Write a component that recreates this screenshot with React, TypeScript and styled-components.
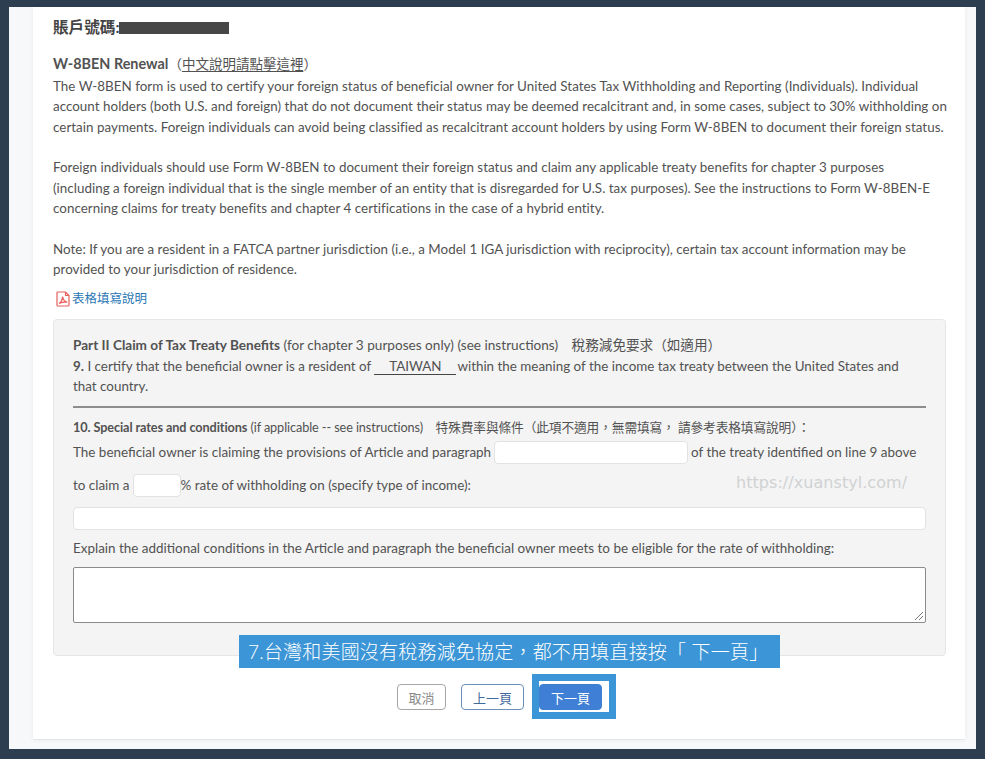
import React from 'react';
import styled, { createGlobalStyle } from 'styled-components';

const GlobalStyle = createGlobalStyle`
  html, body {
    margin: 0;
    padding: 0;
    background: #2c3e50;
  }
  body {
    font-family: Lato, "Noto Sans CJK TC", sans-serif;
    color: #525252;
  }
`;

const Page = styled.div`
  width: 985px;
  height: 759px;
  box-sizing: border-box;
  padding: 7px 9px 10px;
  overflow: hidden;
`;

const Shell = styled.div`
  height: 100%;
  background: #f7f8fa;
  padding: 0 11px 0 24px;
`;

const Panel = styled.main`
  position: relative;
  height: 733px;
  box-sizing: border-box;
  background: #fff;
  border-bottom: 1px solid #e6e7ea;
  box-shadow: 0 0 5px rgba(0, 0, 0, 0.06);
  padding: 10px 20px 0;
  font-size: 13.4px;
  line-height: 20.4px;
`;

const AccountRow = styled.div`
  display: flex;
  align-items: center;
  height: 20px;
  font-size: 15.6px;
  font-weight: 700;
  color: #444;
`;

const Redacted = styled.span`
  width: 110px;
  height: 12px;
  margin-top: 1px;
  background: #474747;
`;

const FormTitle = styled.div`
  margin-top: 15.2px;
  height: 23.6px;
  line-height: 23.6px;
  font-size: 13.5px;
  b { font-weight: 700; font-size: 14.4px; }
  u { text-underline-offset: 2px; }
`;

const Paragraph = styled.p`
  margin: 0 0 20.4px;
  letter-spacing: 0.02px;
  white-space: nowrap;
`;

const PdfLink = styled.a`
  display: flex;
  align-items: center;
  gap: 2px;
  margin: -11px 0 0 3px;
  height: 20px;
  color: #2a77b5;
  font-size: 12.5px;
`;

const Well = styled.section`
  margin-top: 10px;
  width: 893px;
  height: 337px;
  box-sizing: border-box;
  background: #f4f4f4;
  border: 1px solid #e6e6e6;
  border-radius: 4px;
  padding: 15px 19px 0;
`;

const PartLine = styled.div`
  font-size: 13.6px;
  white-space: nowrap;
`;

const CertifyLine = styled.div`
  font-size: 13.4px;
  white-space: nowrap;
`;

const FilledBlank = styled.span`
  display: inline-block;
  width: 82px;
  margin-right: 1px;
  text-align: center;
  line-height: 16px;
  border-bottom: 1px solid #444;
`;

const Divider = styled.hr`
  margin: 10px 0 9px;
  border: 0;
  border-top: 2px solid #8d8d8d;
`;

const SmallLine = styled.div`
  font-size: 12.7px;
  height: 20px;
  letter-spacing: -0.1px;
  white-space: nowrap;
  b { font-weight: 700; }
`;

const FieldRow = styled.div`
  display: flex;
  align-items: center;
  height: 24px;
  margin-top: ${p => p.$top ?? 0}px;
  font-size: 13.45px;
  white-space: nowrap;
`;

const TextBox = styled.div`
  box-sizing: border-box;
  flex: none;
  width: ${p => (p.$w ? `${p.$w}px` : '100%')};
  height: 23px;
  margin: 0 ${p => p.$after ?? 0}px 0 ${p => (p.$w ? 3 : 0)}px;
  background: #fff;
  border: 1px solid #e2e2e2;
  border-radius: 4px;
`;

const Label = styled.div`
  margin-top: 8px;
  height: 20px;
  font-size: 13.45px;
  white-space: nowrap;
`;

const Explain = styled.div`
  box-sizing: border-box;
  position: relative;
  margin-top: 9px;
  height: 56px;
  background: #fff;
  border: 1px solid #8a8a8a;
  border-radius: 2px;
`;

const Grip = styled.svg`
  position: absolute;
  right: 1px;
  bottom: 1px;
`;

const Watermark = styled.div`
  position: absolute;
  left: 703px;
  top: 464px;
  font-family: "DejaVu Sans", sans-serif;
  font-size: 16px;
  line-height: 24px;
  color: #d0d2d3;
  letter-spacing: 0.05px;
`;

const Buttons = styled.div`
  display: flex;
  gap: 15px;
  margin: 28px 0 0 344px;
`;

const Btn = styled.button`
  box-sizing: border-box;
  width: ${p => p.$w}px;
  height: 26px;
  padding: 0;
  font: 13px Lato, "Noto Sans CJK TC", sans-serif;
  border-radius: 4px;
  border: 1px solid ${p => p.$border};
  background: ${p => p.$bg};
  color: ${p => p.$color};
`;

const Caption = styled.div`
  position: absolute;
  left: 206px;
  top: 628px;
  width: 541px;
  height: 33px;
  box-sizing: border-box;
  padding-left: 9px;
  background: #3b95d6;
  color: #fff;
  font-size: 19px;
  font-weight: 300;
  letter-spacing: 0.2px;
  line-height: 33px;
  white-space: nowrap;
`;

const Highlight = styled.div`
  position: absolute;
  left: 499px;
  top: 667px;
  width: 84px;
  height: 45px;
  box-sizing: border-box;
  border: 7px solid #3b95d6;
  pointer-events: none;
`;

const PdfIcon = () => (
  <svg width="14" height="16" viewBox="0 0 14 16" fill="none" stroke="#e8605c">
    <path d="M2 1h7.5L13 4.5V14a1 1 0 0 1-1 1H2a1 1 0 0 1-1-1V2a1 1 0 0 1 1-1zM9.5 1v3.5H13" strokeWidth="1.2" />
    <path d="M3 12.5c2-1.2 3.3-3.6 3.6-7 .4 2.8 2 5 4.6 5.6-3-.3-5.800.2-8.200 1.400z" strokeWidth="1.3" />
  </svg>
);

export default function App() {
  return (
    <Page>
      <GlobalStyle />
      <Shell>
        <Panel>
          <AccountRow>
            賬戶號碼:<Redacted />
          </AccountRow>
          <FormTitle>
            <b>W-8BEN Renewal</b>（<u>中文說明請點擊這裡</u>）
          </FormTitle>
          <Paragraph>
            The W-8BEN form is used to certify your foreign status of beneficial owner for United States Tax Withholding and Reporting (Individuals). Individual<br />
            account holders (both U.S. and foreign) that do not document their status may be deemed recalcitrant and, in some cases, subject to 30% withholding on<br />
            certain payments. Foreign individuals can avoid being classified as recalcitrant account holders by using Form W-8BEN to document their foreign status.
          </Paragraph>
          <Paragraph>
            Foreign individuals should use Form W-8BEN to document their foreign status and claim any applicable treaty benefits for chapter 3 purposes<br />
            (including a foreign individual that is the single member of an entity that is disregarded for U.S. tax purposes). See the instructions to Form W-8BEN-E<br />
            concerning claims for treaty benefits and chapter 4 certifications in the case of a hybrid entity.
          </Paragraph>
          <Paragraph>
            Note: If you are a resident in a FATCA partner jurisdiction (i.e., a Model 1 IGA jurisdiction with reciprocity), certain tax account information may be<br />
            provided to your jurisdiction of residence.
          </Paragraph>
          <PdfLink>
            <PdfIcon />
            表格填寫說明
          </PdfLink>
          <Well>
            <PartLine>
              <b>Part II Claim of Tax Treaty Benefits</b> (for chapter 3 purposes only) (see instructions)　稅務減免要求（如適用）
            </PartLine>
            <CertifyLine>
              <b>9.</b> I certify that the beneficial owner is a resident of <FilledBlank>TAIWAN</FilledBlank>within the meaning of the income tax treaty between the United States and<br />
              that country.
            </CertifyLine>
            <Divider />
            <SmallLine>
              <b>10. Special rates and conditions</b> (if applicable -- see instructions)　特殊費率與條件（此項不適用，無需填寫， 請參考表格填寫說明）：
            </SmallLine>
            <FieldRow $top={3}>
              The beneficial owner is claiming the provisions of Article and paragraph
              <TextBox $w={194} $after={3} />
              of the treaty identified on line 9 above
            </FieldRow>
            <FieldRow $top={9}>
              to claim a
              <TextBox $w={48} />
              % rate of withholding on (specify type of income):
            </FieldRow>
            <FieldRow $top={9}>
              <TextBox />
            </FieldRow>
            <Label>Explain the additional conditions in the Article and paragraph the beneficial owner meets to be eligible for the rate of withholding:</Label>
            <Explain>
              <Grip width="10" height="10" viewBox="0 0 10 10" stroke="#777" strokeWidth="1">
                <path d="M1 9 9 1M5 9l4-4" />
              </Grip>
            </Explain>
          </Well>
          <Buttons>
            <Btn $w={49} $border="#a6a6a6" $bg="#fff" $color="#8a8a8a">取消</Btn>
            <Btn $w={63} $border="#6d8fb8" $bg="#fff" $color="#3f6a9e">上一頁</Btn>
            <Btn $w={63} $border="#3f7fd0" $bg="#3f80d6" $color="#fff">下一頁</Btn>
          </Buttons>
          <Watermark>https://xuanstyl.com/</Watermark>
          <Caption>7.台灣和美國沒有稅務減免協定，都不用填直接按「 下一頁」</Caption>
          <Highlight />
        </Panel>
      </Shell>
    </Page>
  );
}
